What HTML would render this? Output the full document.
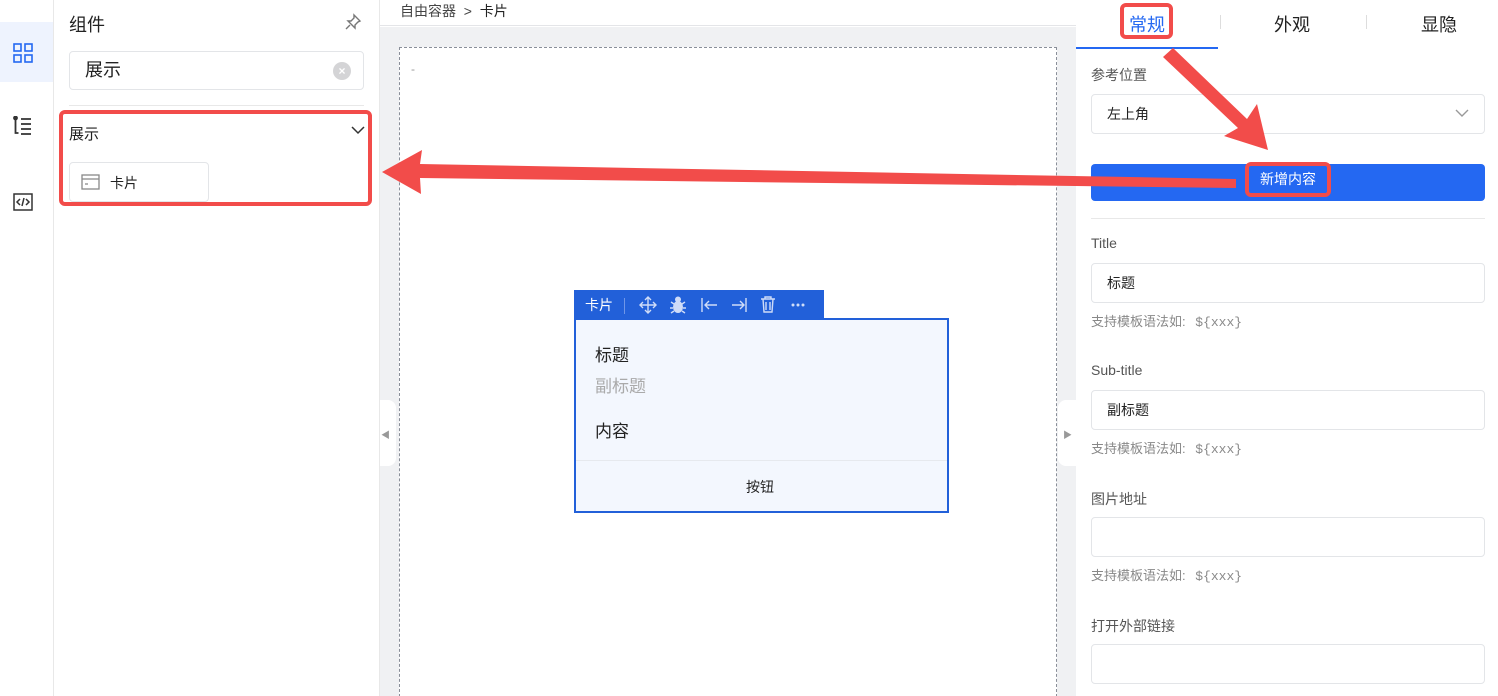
<!DOCTYPE html>
<html><head><meta charset="utf-8"><style>
*{box-sizing:border-box;margin:0;padding:0}
html,body{width:1498px;height:696px;overflow:hidden}
body{position:relative;background:#fff;font-family:"Liberation Sans","Noto Sans CJK SC",sans-serif;color:#222}
.abs{position:absolute}
.lbl{font-size:14px;color:#555}
.inp{position:absolute;left:1091px;width:394px;height:40px;border:1px solid #e3e5e8;border-radius:4px;font-size:14px;padding:0 15px;line-height:38px;color:#222}
.hint{position:absolute;left:1091px;font-size:13px;color:#888}
.hint span{font-family:"Liberation Mono",monospace;margin-left:6px}
</style></head><body>
<div class="abs" style="left:0;top:0;width:54px;height:696px;border-right:1px solid #e8e8e8"></div>
<div class="abs" style="left:0;top:22px;width:53px;height:60px;background:#eef3fe"></div>
<svg class="abs" style="left:13px;top:43px" width="20" height="20" viewBox="0 0 20 20" fill="none" stroke="#2468f2" stroke-width="1.6"><rect x="1" y="1" width="7" height="7"/><rect x="12" y="1" width="7" height="7"/><rect x="1" y="12" width="7" height="7"/><rect x="12" y="12" width="7" height="7"/></svg>
<svg class="abs" style="left:13px;top:116px" width="20" height="20" viewBox="0 0 20 20" fill="none" stroke="#333" stroke-width="1.8"><circle cx="2.5" cy="2" r="1.5" fill="#333"/><path d="M2.5 3v14h3M8 3h10M8 8h10M8 13h10M8 18h10"/></svg>
<svg class="abs" style="left:13px;top:193px" width="20" height="18" viewBox="0 0 20 18" fill="none" stroke="#333" stroke-width="1.5"><rect x="1" y="1" width="18" height="16"/><path d="M7 6l-3 3 3 3M13 6l3 3-3 3M11 5l-2 8"/></svg>
<div class="abs" style="left:54px;top:0;width:326px;height:696px;border-right:1px solid #e8e8e8"></div>
<div class="abs" style="left:69px;top:11px;font-size:18px">组件</div>
<svg class="abs" style="left:344px;top:13px" width="18" height="18" viewBox="0 0 18 18" fill="none" stroke="#777" stroke-width="1.4"><path d="M10 2l6 6-2 1-3 3 0 3-7-7 3 0 3-3z M6 12l-4 4"/></svg>
<div class="abs" style="left:69px;top:51px;width:295px;height:39px;border:1px solid #e3e5e8;border-radius:4px;font-size:18px;line-height:37px;padding-left:15px">展示</div>
<div class="abs" style="left:333px;top:62px;width:18px;height:18px;border-radius:50%;background:#d4d4d6;color:#fff;font-size:12px;text-align:center;line-height:18px;font-weight:bold">×</div>
<div class="abs" style="left:69px;top:105px;width:295px;height:1px;background:#e8e8e8"></div>
<div class="abs" style="left:69px;top:123px;font-size:15px">展示</div>
<svg class="abs" style="left:351px;top:126px" width="14" height="9" viewBox="0 0 14 9" fill="none" stroke="#333" stroke-width="1.5"><path d="M1 1l6 6 6-6"/></svg>
<div class="abs" style="left:69px;top:162px;width:140px;height:40px;border:1px solid #e3e5e8;border-radius:4px"></div>
<svg class="abs" style="left:81px;top:174px" width="19" height="16" viewBox="0 0 19 16" fill="none" stroke="#888" stroke-width="1.3"><rect x="1" y="1" width="17" height="14"/><path d="M1 5h17M4 10h3"/></svg>
<div class="abs" style="left:110px;top:173px;font-size:14px">卡片</div>
<div class="abs" style="left:59px;top:110px;width:313px;height:96px;border:4px solid #f24c4a;border-radius:6px"></div>
<div class="abs" style="left:380px;top:0;width:696px;height:26px;background:#fff;border-bottom:1px solid #e4e5e8;font-size:14px;line-height:22px;padding-left:20px;color:#444">自由容器 &nbsp;&gt;&nbsp; <span style="color:#222">卡片</span></div>
<div class="abs" style="left:380px;top:27px;width:696px;height:669px;background:#f0f1f3"></div>
<div class="abs" style="left:399px;top:47px;width:658px;height:660px;background:#fff;border:1px dashed #8a8f99"></div>
<div class="abs" style="left:411px;top:62px;font-size:12px;color:#999">-</div>
<div class="abs" style="left:380px;top:400px;width:16px;height:66px;background:#fff;border-radius:0 8px 8px 0"></div>
<div class="abs" style="left:381px;top:428px;font-size:9px;color:#999">◀</div>
<div class="abs" style="left:1058px;top:400px;width:18px;height:66px;background:#fff;border-radius:8px 0 0 8px"></div>
<div class="abs" style="left:1063px;top:428px;font-size:9px;color:#999">▶</div>
<!-- card -->
<div class="abs" style="left:574px;top:290px;width:250px;height:30px;background:#2260d9;color:#fff;font-size:14px;line-height:30px;padding-left:11px">卡片</div>
<div class="abs" style="left:624px;top:298px;width:1px;height:16px;background:#6f96e8"></div>
<svg class="abs" style="left:574px;top:290px" width="250" height="30" fill="none" stroke="#cfdcf8" stroke-width="1.4">
<path d="M74 7v16M66 15h16M71 10l3-3 3 3M71 20l3 3 3-3M69 12l-3 3 3 3M79 12l3 3-3 3"/>
<g fill="#cfdcf8" stroke="none"><ellipse cx="104" cy="17" rx="5" ry="6"/><circle cx="104" cy="9.5" r="3"/></g>
<path d="M97 12l3 2M111 12l-3 2M96 18h3M112 18h-3M97 23l3-2M111 23l-3-2"/>
<path d="M128 8v14M131 15h12M135 11l-4 4 4 4"/>
<path d="M172 8v14M158 15h12M166 11l4 4-4 4"/>
<path d="M187 9h14M191 9v-2h6v2M189 9l1 13h8l1-13M192 12v8M196 12v8"/>
<g fill="#cfdcf8" stroke="none"><circle cx="219" cy="15" r="1.5"/><circle cx="224" cy="15" r="1.5"/><circle cx="229" cy="15" r="1.5"/></g>
</svg>
<div class="abs" style="left:574px;top:318px;width:375px;height:195px;border:2px solid #2260d9;background:#f3f7fe"></div>
<div class="abs" style="left:595px;top:341px;font-size:17px">标题</div>
<div class="abs" style="left:595px;top:372px;font-size:17px;color:#aaa">副标题</div>
<div class="abs" style="left:595px;top:417px;font-size:17px">内容</div>
<div class="abs" style="left:576px;top:460px;width:371px;height:1px;background:#e6e9ee"></div>
<div class="abs" style="left:746px;top:477px;font-size:14px">按钮</div>
<!-- right panel -->
<div class="abs" style="left:1076px;top:0;width:422px;height:696px;background:#fff"></div>
<div class="abs" style="left:1076px;top:47px;width:142px;height:2px;background:#2468f2"></div>
<div class="abs" style="left:1129px;top:11px;font-size:18px;color:#2468f2">常规</div>
<div class="abs" style="left:1220px;top:15px;width:1px;height:14px;background:#ddd"></div>
<div class="abs" style="left:1274px;top:11px;font-size:18px">外观</div>
<div class="abs" style="left:1366px;top:15px;width:1px;height:14px;background:#ddd"></div>
<div class="abs" style="left:1421px;top:11px;font-size:18px">显隐</div>
<div class="abs" style="left:1120px;top:3px;width:53px;height:36px;border:4px solid #f24c4a;border-radius:6px"></div>
<div class="abs lbl" style="left:1091px;top:65px">参考位置</div>
<div class="inp" style="top:94px;color:#222">左上角</div>
<svg class="abs" style="left:1455px;top:109px" width="14" height="9" viewBox="0 0 14 9" fill="none" stroke="#999" stroke-width="1.4"><path d="M1 1l6 6 6-6"/></svg>
<div class="abs" style="left:1091px;top:164px;width:394px;height:37px;background:#2468f2;border-radius:4px"></div>
<div class="abs" style="left:1245px;top:162px;width:86px;height:35px;border:4px solid #f24c4a;border-radius:6px;color:#fff;font-size:14px;text-align:center;line-height:27px">新增内容</div>
<div class="abs" style="left:1091px;top:218px;width:394px;height:1px;background:#e8e8e8"></div>
<div class="abs lbl" style="left:1091px;top:235px">Title</div>
<div class="inp" style="top:263px">标题</div>
<div class="hint" style="top:311px">支持模板语法如: <span>${xxx}</span></div>
<div class="abs lbl" style="left:1091px;top:362px">Sub-title</div>
<div class="inp" style="top:390px">副标题</div>
<div class="hint" style="top:438px">支持模板语法如: <span>${xxx}</span></div>
<div class="abs lbl" style="left:1091px;top:489px">图片地址</div>
<div class="inp" style="top:517px"></div>
<div class="hint" style="top:565px">支持模板语法如: <span>${xxx}</span></div>
<div class="abs lbl" style="left:1091px;top:616px">打开外部链接</div>
<div class="inp" style="top:644px"></div>
<svg class="abs" style="left:0;top:0" width="1498" height="696">
<path d="M1236 179 L420 164 L422 150 L382 172 L421 194 L420 178 L1236 188Z" fill="#f24c4a"/>
<path d="M1163 57 L1238 128 L1224 136 L1268 150 L1257 104 L1247 119 L1173 48Z" fill="#f24c4a"/>
</svg>
</body></html>
